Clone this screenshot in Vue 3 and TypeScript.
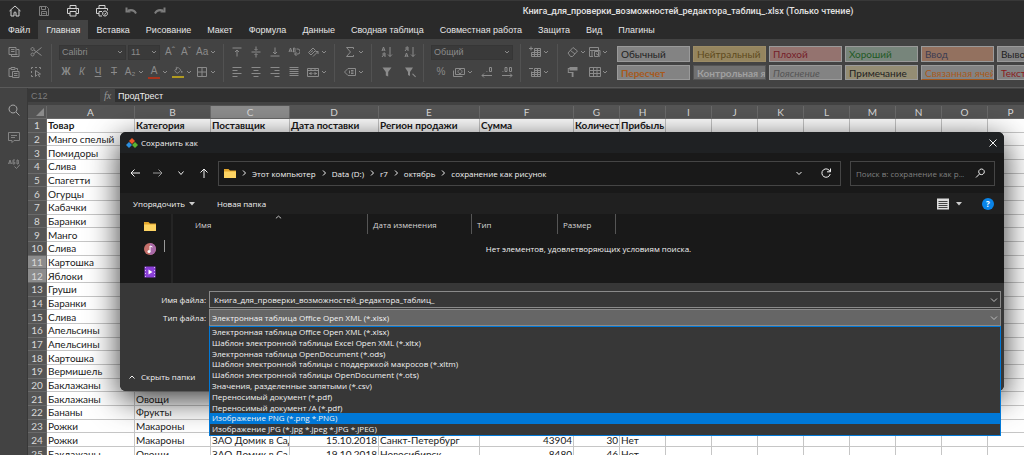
<script setup lang="ts">
import { ref } from 'vue'

interface Tool {
  name: string
  label: string
  text?: string
  cls?: string
  drop?: boolean
}

const icons: Record<string, string> = {
  copy: 'M1 1.5h7v7h-7zM8.500 3.500h2.500v7h-7.500v-2M3 3.500h3.500M3 5.500h3.500M6 8.500h3.500',
  paste: 'M3 2.500H1v8h3M3 1.500h4v2H3zM7.500 2.500H9.500v2M4.500 5.500h6.500v6H4.500zM6 7.500h3.500M6 9.500h3.500',
  cut: 'M11.500 1.500 4 7.500M11.500 9.500 4 4M2.500 1.500a1.500 1.500 0 1 0 .01 0M2.500 7a1.500 1.500 0 1 0 .01 0',
  pick: 'M1.500 3V1.500H3M5 1.500h2M9 1.500h1.500V3M1.500 5v2M1.500 9v1.500H3M5.500 4.500l5 3.500-2.300.4 1.500 2.700M5.500 4.500v6l1.700-1.800',
  top: 'M1.500 2h9M6 10.500V4M4 6l2-2 2 2',
  middle: 'M1.500 6h9M6 .500v3.500M4.500 3 6 4.500 7.500 3M6 11.500V8M4.500 9 6 7.500 7.500 9',
  bottom: 'M1.500 10h9M6 1.500v6M4 6l2 2 2-2',
  wrap: 'M1 6l1.500-4L4 6M1.500 5h2M5.500 2v4h1.200q1.500-1 0-2 1-1 0-2zM8.500 3h1.500q2 0 2 2.500t-2 2.500H7M8.500 6 6.500 8l2 2',
  orient: 'M1.500 6.500 6 2l2.500 2.500L4 9zM3.500 6.500 6 4.500M6 10.500l5-5M8.500 5.500H11V8',
  left: 'M1.500 1.500h9M1.500 4.500h5M1.500 7.500h9M1.500 10.500h5',
  center: 'M1.500 1.500h9M3.500 4.500h5M1.500 7.500h9M3.500 10.500h5',
  right: 'M1.500 1.500h9M5.500 4.500h5M1.500 7.500h9M5.500 10.500h5',
  justify: 'M1.500 1.500h9M1.500 3.500h9M1.500 5.500h9M1.500 7.500h9M1.500 9.500h9',
  merge: 'M.500 2.500h11v8H.500zM.500 4.500h11M4 2.500v2M8 2.500v2M2 7.500h2.500M7.500 7.500H10M3.500 6 5 7.500 3.500 9M8.500 6 7 7.500 8.500 9',
  sum: 'M9.500 3V1.500h-7L6.500 6l-4 4.500h7V9',
  tag: 'M4 2.500h7.500v7H4L.500 6zM5.500 4.500v3M7 4.500h2.500M7 6h2.500M7 7.500h2.500',
  sortAsc: 'M1 5l1.500-4L4 5M1.500 4h2M4 11V7H2.500q-1.500 1 0 2H4M2.500 9 1 11M9 1v9.500M7 8.500l2 2 2-2',
  sortDesc: 'M4 5V1H2.500Q1 2 2.500 3H4M2.500 3 1 5M1 11l1.500-4L4 11M1.500 10h2M9 1v9.500M7 8.500l2 2 2-2',
  money: 'M2.500 2.500h9v6h-9zM.500 4.500v6h9M7 3.500a2 2 0 1 0 .01 0',
  insertCells: 'M0 2.500h4M2 .500v4M5.500 2.500h6v8H2.500v-4M2.500 6.500h9M5.500 4.500h6M5.500 2.500v8M8.500 2.500v8M2.500 8.500h9',
  deleteCells: 'M0 2.500h4M5.500 2.500h6v8H2.500v-5M2.500 6.500h9M5.500 4.500h6M5.500 2.500v8M8.500 2.500v8M2.500 8.500h9',
  eraser: 'M1 7l5-5.500 4.500 3.500-5 5.500H3.500zM3.500 4.500 8 8',
  condition: 'M.500 1.500h9v3h-9zM.500 4.500v6H4M3 4.500v6M5.500 5.500h4v5h-4zM7 7.500l4 3M8 4.500h3v5',
  table: 'M.500 1.500h11v9H.500zM.500 4.500h11M.500 7.500h11M4.500 1.500v9M8 1.500v9',
  border: 'M1.500 1.500h9v9h-9zM6 1.500v9M1.500 6h9',
  bucket: 'M2 5.500 6 1.500 9.500 5 6 8.500H4.500zM4 1v4M10.500 6q1 2 0 2t0-2',
  lessDigits: 'M1 9.500h10M3 7.500l-2 2 2 2M5.500 5.500h.8M8.500 1.500h2v4h-2z',
  moreDigits: 'M1 9.500h10M9 7.500l2 2-2 2M1.500 5.500h.8M4 1.500h2v4H4zM8.500 1.500h2v4h-2z',
}
const solid: Record<string, string> = {
  filter: 'M1.500 1.500h9L7.200 6v4.500l-2.400-1V6z',
  unfilter: 'M1 1.500h8L6 6v4l-2-1V6zM8 8l1-.5 3 3-.8.8z',
  painter: 'M2.500 1h8v3.500h-8zM.800 2h1.700v1H1.800v3h4.700v5H4.700V7H.800z',
}

const edit: Tool[][] = [
  [{ name: 'copy', label: 'Копировать' }, { name: 'cut', label: 'Вырезать' }],
  [{ name: 'paste', label: 'Вставить' }, { name: 'pick', label: 'Выделить' }],
]
const fontSizing: Tool[] = [
  { name: '', label: 'Увеличить шрифт', text: 'Aˆ' },
  { name: '', label: 'Уменьшить шрифт', text: 'Aˇ' },
  { name: '', label: 'Регистр', text: 'Aa', drop: true },
]
const fontStyle: Tool[] = [
  { name: '', label: 'Полужирный', text: 'Ж', cls: 'bold' },
  { name: '', label: 'Курсив', text: 'К', cls: 'italic' },
  { name: '', label: 'Подчёркнутый', text: 'Ч', cls: 'under' },
  { name: '', label: 'Зачёркнутый', text: 'Т', cls: 'strike' },
  { name: '', label: 'Индекс', text: 'A₂', drop: true },
  { name: '', label: 'Цвет шрифта', text: 'A', cls: 'red', drop: true },
  { name: 'bucket', label: 'Заливка', cls: 'yellow', drop: true },
  { name: 'border', label: 'Границы', drop: true },
]
const align: Tool[][] = [
  [
    { name: 'top', label: 'По верхнему краю' }, { name: 'middle', label: 'Посередине' },
    { name: 'bottom', label: 'По нижнему краю' }, { name: 'wrap', label: 'Перенос' },
    { name: 'orient', label: 'Ориентация', drop: true },
  ],
  [
    { name: 'left', label: 'Слева' }, { name: 'center', label: 'По центру' },
    { name: 'right', label: 'Справа' }, { name: 'justify', label: 'По ширине' },
    { name: 'merge', label: 'Объединить', drop: true },
  ],
]
const sums: Tool[][] = [
  [{ name: 'sum', label: 'Сумма', drop: true }],
  [{ name: 'tag', label: 'Имена', drop: true }],
]
const sorting: Tool[][] = [
  [{ name: 'sortAsc', label: 'По возрастанию' }, { name: 'sortDesc', label: 'По убыванию' }],
  [{ name: 'filter', label: 'Фильтр' }, { name: 'unfilter', label: 'Очистить фильтр' }],
]
const numbers: Tool[] = [
  { name: '', label: 'Процент', text: '%' },
  { name: 'money', label: 'Денежный', drop: true },
  { name: 'lessDigits', label: 'Меньше знаков' },
  { name: 'moreDigits', label: 'Больше знаков' },
]
const cellsTools: Tool[][] = [
  [{ name: 'insertCells', label: 'Вставить ячейки', drop: true }],
  [{ name: 'deleteCells', label: 'Удалить ячейки', drop: true }],
]
const formatting: Tool[][] = [
  [{ name: 'eraser', label: 'Очистить', drop: true }, { name: 'condition', label: 'Условное форматирование', drop: true }],
  [{ name: 'painter', label: 'Формат по образцу' }, { name: 'table', label: 'Таблица', drop: true }],
]
const blocks = [
  { key: 'edit', rows: edit },
  { key: 'font', rows: [fontSizing, fontStyle] },
  { key: 'align', rows: align },
  { key: 'sums', rows: sums },
  { key: 'sorting', rows: sorting },
  { key: 'numbers', rows: [[], numbers] as Tool[][] },
  { key: 'cells', rows: cellsTools },
  { key: 'formatting', rows: formatting },
]

const tabs = ['Файл', 'Главная', 'Вставка', 'Рисование', 'Макет', 'Формула', 'Данные', 'Сводная таблица', 'Совместная работа', 'Защита', 'Вид', 'Плагины']
const activeTab = ref('Главная')

const styles = [
  ['Обычный', 'normal'], ['Нейтральный', 'neutral'], ['Плохой', 'bad'], ['Хороший', 'good'], ['Ввод', 'entry'], ['Вывод', 'output'],
  ['Пересчет', 'recalc'], ['Контрольная ячейка', 'control'], ['Пояснение', 'explain'], ['Примечание', 'note'], ['Связанная ячейка', 'linked'], ['Текст', 'warn'],
]

const columns = ['A', 'B', 'C', 'D', 'E', 'F', 'G', 'H', 'I', 'J', 'K', 'L', 'M', 'N', 'O', 'P']
const rows: string[][] = [
  ['Товар', 'Категория', 'Поставщик', 'Дата поставки', 'Регион продажи', 'Сумма', 'Количество', 'Прибыль'],
  ['Манго спелый'], ['Помидоры'], ['Слива'], ['Спагетти'], ['Огурцы'], ['Кабачки'], ['Баранки'], ['Манго'], ['Слива'],
  ['Картошка'], ['Яблоки'], ['Груши'], ['Баранки'], ['Слива'], ['Апельсины'], ['Апельсины'], ['Картошка'], ['Вермишель'], ['Баклажаны'],
  ['Баклажаны', 'Овощи'],
  ['Бананы', 'Фрукты'],
  ['Рожки', 'Макароны'],
  ['Рожки', 'Макароны', 'ЗАО Домик в Сад', '15.10.2018', 'Санкт-Петербург', '43904', '30', 'Нет'],
  ['Баклажаны', 'Овощи', 'ЗАО Домик в Сад', '19.10.2018', 'Новосибирск', '8480', '46', 'Нет'],
]
const isNumeric = (v?: string) => !!v && /^[\d.]+$/.test(v)

const crumbs = ['Этот компьютер', 'Data (D:)', 'r7', 'октябрь', 'сохранение как рисунок']
const fileName = ref('Книга_для_проверки_возможностей_редактора_таблиц_')
const formula = ref('ПродТрест')
const fileTypes = [
  'Электронная таблица Office Open XML (*.xlsx)',
  'Шаблон электронной таблицы Excel Open XML (*.xltx)',
  'Электронная таблица OpenDocument (*.ods)',
  'Шаблон электронной таблицы с поддержкой макросов (*.xltm)',
  'Шаблон электронной таблицы OpenDocument (*.ots)',
  'Значения, разделенные запятыми (*.csv)',
  'Переносимый документ (*.pdf)',
  'Переносимый документ /A (*.pdf)',
  'Изображение PNG (*.png *.PNG)',
  'Изображение JPG (*.jpg *.jpeg *.JPG *.JPEG)',
]
const selectedType = ref(fileTypes[0])
const hovered = ref(8)
</script>

<template>
  <div class="app">
    <header class="titlebar">
      <nav class="quick" aria-label="Быстрый доступ">
        <button aria-label="Домой"><svg viewBox="0 0 12 12"><path d="M.5 6 6 1l5.500 5M2 5v6h3V8q0-1 1-1t1 1v3h3V5" /></svg></button>
        <button class="dim" aria-label="Сохранить"><svg viewBox="0 0 12 12"><path d="M1.500 1.500h7l2 2v7h-9zM3.500 1.500v3h4v-3M3.500 10.500v-4h5v4M4.500 8.500h3" /></svg></button>
        <button aria-label="Печать"><svg viewBox="0 0 12 12"><path d="M3 3.500v-3h6v3M3 8.500H.500v-5h11v5H9M3 6.500h6v4.500H3zM9 5h1" /></svg></button>
        <button aria-label="Быстрая печать"><svg viewBox="0 0 12 12"><path d="M3 3.500v-3h6v3M3 8.500H.500v-5h11v2M3 11V6.500h3M3 11h3M9 6a2.500 2.500 0 1 0 .01 0M7.800 8.500l1 1L10.500 7.500" /></svg></button>
        <button class="dim" aria-label="Отменить"><svg viewBox="0 0 12 12"><path class="thick" d="M11 8.500Q9 4 3 5.500M1.500 2.500v4h4" /></svg></button>
        <button class="dim" aria-label="Повторить"><svg viewBox="0 0 12 12"><path class="thick" d="M1 8.500q2-4.500 8-3M10.500 2.500v4h-4" /></svg></button>
      </nav>
      <h1>Книга_для_проверки_возможностей_редактора_таблиц_.xlsx (Только чтение)</h1>
    </header>

    <nav class="tabs" aria-label="Вкладки">
      <button v-for="t in tabs" :key="t" :class="{ active: t === activeTab }" @click="activeTab = t">{{ t }}</button>
    </nav>

    <section class="ribbon" aria-label="Главная">
      <div v-for="b in blocks" :key="b.key" class="block" :class="b.key">
        <div v-for="(line, i) in b.rows" :key="i" class="line">
          <template v-if="b.key === 'font' && i === 0">
            <span class="pick font-name">
              <select aria-label="Шрифт"><option>Calibri</option></select>
              <svg class="chev" viewBox="0 0 6 6"><path d="M1 2l2 2 2-2" /></svg>
            </span>
            <span class="pick font-size">
              <select aria-label="Размер"><option>11</option></select>
              <svg class="chev" viewBox="0 0 6 6"><path d="M1 2l2 2 2-2" /></svg>
            </span>
          </template>
          <span v-if="b.key === 'numbers' && i === 0" class="pick format">
            <select aria-label="Формат"><option>Общий</option></select>
            <svg class="chev" viewBox="0 0 6 6"><path d="M1 2l2 2 2-2" /></svg>
          </span>
          <button v-for="t in line" :key="t.label" class="tool" :class="[t.cls, { drop: t.drop }]" :aria-label="t.label">
            <span v-if="t.text" class="glyph">{{ t.text }}</span>
            <svg v-else viewBox="0 0 12 12" class="icon">
              <path v-if="icons[t.name]" :d="icons[t.name]" />
              <path v-else :d="solid[t.name]" class="solid" />
            </svg>
            <svg v-if="t.drop" class="chev" viewBox="0 0 6 6"><path d="M1 2l2 2 2-2" /></svg>
          </button>
        </div>
      </div>
      <div class="gallery">
        <button v-for="s in styles" :key="s[0]" :class="s[1]">{{ s[0] }}</button>
      </div>
    </section>

    <div class="work">
      <aside class="side">
        <button aria-label="Поиск"><svg viewBox="0 0 12 12"><path d="M5 1a4 4 0 1 0 .01 0M8 8l3.500 3.500" /></svg></button>
        <button aria-label="Комментарии"><svg viewBox="0 0 12 12"><path d="M.500 1.500h11v8H6L4 11.500v-2H.500zM3 4.500h6M3 6.500h4" /></svg></button>
        <button aria-label="Орфография"><svg viewBox="0 0 12 12"><path d="M.500 6 2 2l1.500 4M1 5h2M7 2H5v4h1.500q1-1 0-2H5M9 2v4h1q1.500-1 0-2 1-1 0-2zM6.500 8.500l2 2L12 6.500" /></svg></button>
      </aside>
      <main class="main">
        <div class="formula">
          <input class="ref" value="C12" aria-label="Ячейка" />
          <button class="fx" aria-label="Вставить функцию"><i>fx</i></button>
          <input v-model="formula" class="expr" aria-label="Формула" />
        </div>
        <div class="sheet">
          <table>
            <colgroup>
              <col class="c-num" /><col v-for="c in columns" :key="c" :class="'c-' + c" />
            </colgroup>
            <thead>
              <tr>
                <th class="corner"><svg viewBox="0 0 8 8"><path d="M8 0v8H0z" /></svg></th>
                <th v-for="c in columns" :key="c" :class="{ sel: c === 'C' }">{{ c }}</th>
              </tr>
            </thead>
            <tbody>
              <tr v-for="(r, i) in rows" :key="i" :class="{ head: i === 0 }">
                <th :class="{ sel: i === 10 || i === 11 }">{{ i + 1 }}</th>
                <td v-for="(c, j) in columns" :key="c" :class="{ num: isNumeric(r[j]) }">{{ r[j] }}</td>
              </tr>
            </tbody>
          </table>
        </div>
      </main>
    </div>

    <div class="dialog" role="dialog" aria-labelledby="dlg-title">
      <div class="dlg-title">
        <svg class="logo" viewBox="0 0 12 10">
          <path d="M6 0l3 3-3 3-3-3z" fill="#f0592a" /><path d="M3 4l3 3-3 3-3-3z" fill="#2d8fe0" /><path d="M9 4l3 3-3 3-3-3z" fill="#5cb531" />
        </svg>
        <h2 id="dlg-title">Сохранить как</h2>
        <button aria-label="Закрыть"><svg viewBox="0 0 12 12"><path d="M2.500 2.500l7 7M9.500 2.500l-7 7" /></svg></button>
      </div>

      <div class="dlg-nav">
        <div class="arrows">
          <button aria-label="Назад"><svg viewBox="0 0 12 12"><path d="M11 6H2M5.500 2.500 2 6l3.500 3.500" /></svg></button>
          <button class="off" aria-label="Вперёд"><svg viewBox="0 0 12 12"><path d="M1 6h9M6.500 2.500 10 6l-3.500 3.500" /></svg></button>
          <button aria-label="Последние"><svg viewBox="0 0 12 12"><path d="M3.500 4.500 6 7.500l2.500-3" /></svg></button>
          <button aria-label="Вверх"><svg viewBox="0 0 12 12"><path d="M6 11V2M2.500 5.500 6 2l3.500 3.500" /></svg></button>
        </div>
        <div class="address">
          <svg class="folder" viewBox="0 0 12 10"><path d="M0 1h4.500L6 2.500h6V10H0z" fill="#e3a62c" /><path d="M0 3.500h12V10H0z" fill="#fdd463" /></svg>
          <template v-for="c in crumbs" :key="c">
            <svg class="arr" viewBox="0 0 6 6"><path d="M2 .500 4.500 3 2 5.500" /></svg>
            <a href="#">{{ c }}</a>
          </template>
          <button class="push" aria-label="История"><svg viewBox="0 0 12 12"><path d="M3.500 5 6 7.500 8.500 5" /></svg></button>
          <button aria-label="Обновить"><svg viewBox="0 0 12 12"><path d="M10 4.500A4.200 4.200 0 1 0 10.200 7M10.500 1.500v3.300H7" /></svg></button>
        </div>
        <label class="search">
          <input type="search" placeholder="Поиск в: сохранение как р..." aria-label="Поиск" />
          <svg viewBox="0 0 12 12"><path d="M7.500 2a2.800 2.800 0 1 0 .01 0M5.500 7 2 10.500" /></svg>
        </label>
      </div>

      <div class="dlg-tools">
        <button class="organize">Упорядочить <svg class="tri" viewBox="0 0 6 4"><path d="M0 0h6L3 3.500z" /></svg></button>
        <button>Новая папка</button>
        <button class="view" aria-label="Вид">
          <svg class="list" viewBox="0 0 12 12"><path d="M0 .500h12v11H0z" fill="#ddd" /><path d="M1.500 3.500h9M1.500 5.500h9M1.500 7.500h9M1.500 9.500h9" stroke="#444" /></svg>
          <svg class="tri" viewBox="0 0 6 4"><path d="M0 0h6L3 3.500z" /></svg>
        </button>
        <button class="help" aria-label="Справка">?</button>
      </div>

      <div class="dlg-body">
        <div class="places">
          <div class="place-list">
            <svg viewBox="0 0 12 12"><path d="M0 2h4.500L6 3.500h6V11H0z" fill="#e3a62c" /><path d="M0 4.500h12V11H0z" fill="#fdd463" /></svg>
            <svg viewBox="0 0 12 12"><circle cx="6" cy="6" r="6" fill="#c56f6a" /><path d="M6 0a6 6 0 0 1 0 12z" fill="#a869a8" /><path d="M6 8.500V3l2.500 1" fill="none" stroke="#fff" /><circle cx="5" cy="8.500" r="1.500" fill="#fff" /></svg>
            <svg viewBox="0 0 12 12"><path d="M.500 .500h11v11H.500z" fill="#8a3fd6" /><path d="M1.500 1v10M10.500 1v10" stroke="#d9b8ff" stroke-dasharray="1 2" /><path d="M4.500 3.500 8.500 6l-4 2.500z" fill="#fff" /></svg>
          </div>
          <span class="thumb"></span>
        </div>
        <div class="files">
          <div class="heads">
            <button class="h-name">Имя</button>
            <svg class="sorted" viewBox="0 0 8 4"><path d="M1 3.500 4 1l3 2.500" /></svg>
            <button class="h-date">Дата изменения</button>
            <button class="h-type">Тип</button>
            <button class="h-size">Размер</button>
          </div>
          <p>Нет элементов, удовлетворяющих условиям поиска.</p>
        </div>
      </div>

      <div class="dlg-foot">
        <label for="fname">Имя файла:</label>
        <div class="field">
          <input id="fname" v-model="fileName" />
          <svg viewBox="0 0 12 12"><path d="M3 4.500 6 7.500l3-3" /></svg>
        </div>
        <label for="ftype">Тип файла:</label>
        <div class="field combo">
          <select id="ftype" v-model="selectedType"><option v-for="f in fileTypes" :key="f">{{ f }}</option></select>
          <svg viewBox="0 0 12 12"><path d="M3 4.500 6 7.500l3-3" /></svg>
          <ul class="menu" role="listbox" aria-label="Тип файла">
            <li v-for="(f, i) in fileTypes" :key="f" role="option" :aria-selected="i === hovered" :class="{ hot: i === hovered }" @mouseenter="hovered = i">{{ f }}</li>
          </ul>
        </div>
        <button class="hide"><svg viewBox="0 0 8 8"><path d="M1.500 5.500 4 3l2.500 2.500" /></svg>Скрыть папки</button>
      </div>
    </div>
  </div>
</template>

<style>
html,
body {
  background: #fff;
}
</style>

<style scoped>
* {
  box-sizing: border-box;
}
.app {
  position: relative;
  display: flex;
  flex-direction: column;
  height: 100vh;
  overflow: hidden;
  background: #434343;
  font-family: "Liberation Sans", Roboto, sans-serif;
  font-size: 9px;
  color: #ddd;
}
button,
input,
select {
  margin: 0;
  padding: 0;
  border: 0;
  background: none;
  color: inherit;
  font: inherit;
  border-radius: 0;
}
select {
  appearance: none;
}
svg {
  display: block;
  flex: none;
  width: 12px;
  height: 12px;
}
svg path {
  fill: none;
  stroke: currentColor;
}
svg path[fill] {
  fill: revert-layer;
  stroke: none;
}
svg path[stroke] {
  stroke: revert-layer;
}
svg .thick {
  stroke-width: 2;
}

.titlebar {
  display: flex;
  align-items: center;
  height: 20px;
  flex: none;
  background: #2a2a2a;
  border-top: 1px solid #383838;
}
.quick {
  display: flex;
  color: #d2d2d2;
}
.quick button {
  display: flex;
  justify-content: center;
  width: 29px;
}
.quick .dim {
  color: #7d7d7d;
}
.titlebar h1 {
  flex: 1;
  margin: 0 0 0 178px;
  font: 500 9px Roboto, sans-serif;
  text-align: center;
  color: #e2e2e2;
  white-space: nowrap;
}

.tabs {
  display: flex;
  height: 19px;
  flex: none;
  background: #2a2a2a;
  color: #e6e6e6;
}
.tabs button {
  padding: 0 8px;
  white-space: nowrap;
}
.tabs .active {
  background: #434343;
}

.ribbon {
  display: flex;
  align-items: center;
  height: 49px;
  flex: none;
  background: #434343;
  border-bottom: 1px solid #5a5a5a;
  color: #8b8b8b;
}
.block {
  flex: none;
  display: flex;
  flex-direction: column;
  gap: 4px;
  height: 38px;
  border-right: 1px solid #525252;
  --w: 16px;
}
.line {
  display: flex;
  align-items: center;
  height: 16px;
}
.edit { width: 52px; padding-left: 3px; --w: 22px; }
.font { width: 172px; padding-left: 6px; }
.align { width: 111px; padding-left: 3px; --w: 19px; }
.sums { width: 37px; padding-left: 7px; }
.sorting { width: 52px; padding-left: 3px; --w: 23px; }
.numbers { width: 97px; padding-left: 7px; }
.cells { width: 37px; padding-left: 6px; }
.formatting { width: 58px; padding-left: 7px; border-right: 0; }
.tool {
  display: flex;
  align-items: center;
  justify-content: center;
  width: var(--w);
  height: 16px;
}
.tool.drop {
  width: 24px;
  justify-content: flex-start;
  padding-left: 2px;
}
.align .tool.drop {
  padding-left: 4px;
}
.numbers .tool {
  width: 20px;
}
.numbers .tool.drop {
  width: 26px;
}
.formatting .tool {
  width: 22px;
}
.formatting .tool:not(.drop) {
  justify-content: flex-start;
  padding-left: 2px;
}
.glyph {
  flex: none;
  width: 12px;
  font-size: 10px;
  line-height: 12px;
  text-align: center;
  white-space: nowrap;
}
.chev {
  width: 6px;
  height: 6px;
  margin-left: 2px;
}
.formatting .chev {
  margin-left: 1px;
}
.solid {
  fill: currentColor;
  stroke: none;
}
.bold { font-weight: 700; }
.italic { font-style: italic; }
.under { text-decoration: underline; }
.strike { text-decoration: line-through; }
.red .glyph { border-bottom: 2px solid #a8331c; }
.yellow .icon { border-bottom: 2px solid #b09a20; }
.pick {
  display: flex;
  align-items: center;
  height: 15px;
  padding: 0 2px;
  background: #3a3a3a;
  border: 1px solid #363636;
}
.pick select {
  flex: 1;
  min-width: 0;
}
.font-name { width: 67px; margin-left: 1px; }
.font-size { width: 32px; margin: 0 2px; }
.format { width: 82px; }
.gallery {
  flex: 1;
  display: grid;
  grid-template-columns: repeat(6, 73px);
  grid-template-rows: 16px 15px;
  gap: 3px;
  overflow: hidden;
  padding: 0 0 0 1px;
}
.gallery button {
  padding: 0 3px;
  overflow: hidden;
  border: 1px solid #9a9a9a;
  background: #838383;
  font: 10px Lato, "Open Sans", sans-serif;
  text-align: left;
  white-space: nowrap;
  color: #222;
}
.gallery .neutral { background: #95855f; border-color: #9c8c66; color: #5e4a1c; }
.gallery .bad { background: #94736f; color: #74202a; }
.gallery .good { background: #77857b; color: #1f5a25; }
.gallery .entry { background: #93715f; color: #3d3d52; }
.gallery .recalc { color: #a8591b; font-weight: 700; }
.gallery .control { background: #707070; color: #a0a0a0; font-weight: 700; border-color: #555; }
.gallery .explain { color: #555; font-style: italic; }
.gallery .note { background: #948d74; }
.gallery .linked { color: #a8591b; border-bottom-color: #a8591b; }
.gallery .warn { color: #8a1c1c; }

.work {
  display: flex;
  flex: 1;
  min-height: 0;
}
.side {
  flex: none;
  display: flex;
  flex-direction: column;
  align-items: center;
  gap: 15px;
  width: 28px;
  padding-top: 16px;
  background: #434343;
  border-right: 1px solid #383838;
  color: #a5a5a5;
}
.side button:nth-child(n + 2) {
  color: #848484;
}
.main {
  flex: 1;
  min-width: 0;
}
.formula {
  display: flex;
  height: 18px;
  padding: 1px 0 3px;
  border-bottom: 1px solid #555;
  background: #434343;
}
.formula .ref {
  width: 72px;
  padding-left: 3px;
  background: #383838;
  color: #7d7d7d;
}
.formula .fx {
  width: 15px;
  font: 10px "Liberation Serif", serif;
  color: #999;
}
.formula .expr {
  flex: 1;
  min-width: 0;
  padding-left: 3px;
  background: #303030;
  color: #eee;
}
.sheet {
  overflow: hidden;
}
table {
  table-layout: fixed;
  width: 1006px;
  height: 355px;
  border-collapse: separate;
  border-spacing: 0;
  background: #fff;
  color: #1a1a1a;
  font: 10px Lato, "Open Sans", sans-serif;
}
.c-num { width: 19px; }
.c-A { width: 88px; }
.c-B { width: 76px; }
.c-C { width: 79px; }
.c-D { width: 89px; }
.c-E { width: 101px; }
.c-F { width: 94px; }
th,
td {
  height: 13px;
  padding: 0 0 0 1px;
  overflow: hidden;
  line-height: 12px;
  white-space: nowrap;
  border-right: 1px solid #c6c6c6;
  border-bottom: 1px solid #c6c6c6;
  text-align: left;
}
th {
  padding: 0;
  background: #555;
  border-color: #6a6a6a;
  color: #d8d8d8;
  font-weight: 400;
  text-align: center;
}
th.sel {
  background: #8c8c8c;
}
.corner svg {
  width: 8px;
  height: 8px;
  margin-left: 8px;
}
.corner path {
  fill: #8b8b8b;
  stroke: none;
}
.head td {
  font-weight: 700;
}
td.num {
  padding-right: 1px;
  text-align: right;
}

.dialog {
  position: absolute;
  top: 132px;
  left: 120px;
  right: 20px;
  border-radius: 6px;
  background: #191919;
  box-shadow: 0 8px 32px rgba(0, 0, 0, 0.8);
  font-family: "Open Sans", "Noto Sans", sans-serif;
  font-size: 8px;
  color: #f2f2f2;
}
.dlg-title {
  display: flex;
  align-items: center;
  height: 21px;
  padding: 0 5px 0 6px;
  border-radius: 6px 6px 0 0;
  background: #1f2123;
}
.dlg-title .logo {
  height: 10px;
}
.dlg-title h2 {
  flex: 1;
  margin: 0 0 0 3px;
  font: inherit;
}
.dlg-nav {
  display: flex;
  align-items: center;
  height: 40px;
  padding: 0 9px;
}
.arrows {
  display: flex;
  gap: 11px;
  width: 89px;
}
.arrows .off {
  color: #999;
}
.address {
  flex: 1;
  display: flex;
  align-items: center;
  height: 25px;
  padding: 0 8px 0 5px;
  border: 1px solid #454545;
}
.address .folder {
  height: 10px;
}
.address .arr {
  width: 6px;
  height: 6px;
  margin: 0 5px;
}
.address a {
  color: inherit;
  text-decoration: none;
  white-space: nowrap;
}
.address .push {
  margin: 0 15px 0 auto;
}
.search {
  display: flex;
  align-items: center;
  width: 145px;
  height: 25px;
  margin-left: 9px;
  padding: 0 8px 0 5px;
  border: 1px solid #454545;
}
.search input {
  flex: 1;
  min-width: 0;
  outline: 0;
}
.search input::placeholder {
  color: #808080;
}
.dlg-tools {
  display: flex;
  align-items: center;
  height: 21px;
  padding: 0 10px 0 13px;
  background: #202020;
}
.organize {
  display: flex;
  align-items: center;
  gap: 4px;
  margin-right: 22px;
}
.tri {
  width: 6px;
  height: 4px;
}
.tri path {
  fill: #ccc;
  stroke: none;
}
.view {
  display: flex;
  align-items: center;
  gap: 7px;
  margin: 0 20px 0 auto;
}
.help {
  width: 12px;
  height: 12px;
  border-radius: 50%;
  background: #0a84e8;
  font-weight: 700;
  line-height: 12px;
  color: #fff;
}
.dlg-body {
  display: flex;
  height: 69px;
}
.places {
  display: flex;
  width: 53px;
  padding: 6px 0 0 24px;
  gap: 8px;
  border-right: 2px solid #242424;
}
.place-list {
  display: flex;
  flex-direction: column;
  gap: 11px;
}
.thumb {
  width: 1px;
  height: 12px;
  margin-top: 20px;
  background: #999;
}
.files {
  flex: 1;
}
.heads {
  display: flex;
  height: 20px;
  color: #d6d6d6;
}
.heads button {
  padding-left: 5px;
  border-right: 1px solid #555;
  text-align: left;
}
.heads .h-name { width: 102px; padding-left: 22px; border-right: 0; }
.heads .h-date { width: 104px; }
.heads .h-type { width: 86px; }
.heads .h-size { width: 58px; }
.heads .sorted {
  width: 93px;
  height: 20px;
  padding: 1px 85px 15px 0;
  border-right: 1px solid #555;
}
.files p {
  margin: 8px 0 0;
  line-height: 14px;
  text-align: center;
}
.dlg-foot {
  display: grid;
  grid-template-columns: 86px 1fr;
  grid-template-rows: 17px 17px auto;
  gap: 1px 3px;
  align-items: center;
  padding: 8px 3px 6px 0;
  border-radius: 0 0 6px 6px;
  background: #373737;
}
.dlg-foot label {
  text-align: right;
}
.field {
  position: relative;
  display: flex;
  align-items: center;
  height: 17px;
  border: 1px solid #8a8a8a;
}
.field input,
.field select {
  flex: 1;
  min-width: 0;
  height: 15px;
  padding-left: 4px;
}
.field svg {
  color: #bbb;
}
.combo {
  background: #666;
}
.combo select {
  padding-left: 2px;
}
.menu {
  position: absolute;
  top: 16px;
  left: -1px;
  right: -1px;
  display: grid;
  grid-auto-rows: 1fr;
  height: 110px;
  margin: 0;
  padding: 0;
  border: 1px solid #0078d7;
  background: #373737;
  list-style: none;
  line-height: 9px;
}
.menu li {
  min-height: 0;
  padding-left: 2px;
  white-space: nowrap;
}
.menu .hot {
  background: #0078d7;
}
.hide {
  display: flex;
  align-items: center;
  gap: 5px;
  height: 17px;
  margin: 41px 0 0 8px;
  white-space: nowrap;
}
.hide svg {
  width: 8px;
  height: 8px;
}
</style>
